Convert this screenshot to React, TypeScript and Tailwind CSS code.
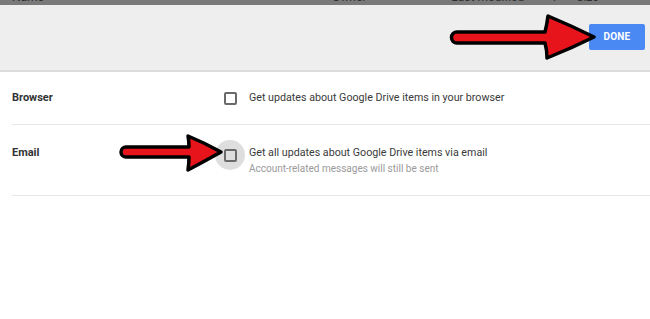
import React from "react";

export default function App() {
  return (
    <div
      className="relative w-[650px] h-[319px] overflow-hidden bg-white"
      style={{ fontFamily: "Roboto, 'Liberation Sans', sans-serif" }}
    >
      {/* cut-off table header */}
      <div className="relative h-[5px] overflow-hidden bg-[#797979] text-[12px] leading-[12px] text-[#2f2f2f]">
        <div className="-mt-[9px] flex">
          <span className="ml-[12px]">Name</span>
          <span className="ml-[288px]">Owner</span>
          <span className="ml-[85px]">Last modified</span>
          <span className="ml-[27px]">↓</span>
          <span className="ml-[19px]">Size</span>
        </div>
      </div>

      {/* action band */}
      <div className="flex h-[67px] items-center justify-end border-b-2 border-[#dcdcdc] bg-[#eeeeee] pr-[5px] pb-[2px]">
        <button className="flex h-[26px] w-[56px] items-center justify-center rounded-[2px] bg-[#4a89f3] text-[10px] font-bold tracking-[0.2px] text-white">
          DONE
        </button>
      </div>

      {/* settings rows */}
      <div className="pl-[12px]">
        <div className="flex h-[53px] items-center border-b border-[#e8e8e8]">
          <div className="w-[212px] text-[11px] font-bold text-[#333]">Browser</div>
          <div className="h-[13px] w-[13px] rounded-[2px] border-2 border-[#6a6a6a]" />
          <div className="ml-[12px] text-[10.7px] text-[#3a3a3a]">
            Get updates about Google Drive items in your browser
          </div>
        </div>
        <div className="flex h-[71px] items-start border-b border-[#e8e8e8] pt-[11px]">
          <div className="mt-[9px] w-[212px] text-[11px] font-bold text-[#333]">Email</div>
          <div className="relative mt-[4px] flex h-[30px] w-[30px] -ml-[9px] -mr-[8px] items-center justify-center rounded-full bg-[#dedede]">
            <div className="h-[13px] w-[13px] rounded-[2px] border-2 border-[#6a6a6a]" />
          </div>
          <div className="ml-[12px] flex flex-col pt-[9px]">
            <div className="text-[10.7px] leading-[16px] text-[#3a3a3a]">
              Get all updates about Google Drive items via email
            </div>
            <div className="text-[10px] leading-[15px] text-[#9a9a9a]">
              Account-related messages will still be sent
            </div>
          </div>
        </div>
      </div>

      {/* annotation arrows */}
      <svg
        className="pointer-events-none absolute left-0 top-0"
        width="650"
        height="319"
        viewBox="0 0 650 319"
      >
        <path
          d="M457,32 L545,32 Q547,24 548,16 Q572,26 594,37 Q572,48 547,58 Q547,50 545,43 L457,43 A5.5,5.5 0 0 1 457,32 Z"
          fill="#e8141b"
          stroke="#000"
          strokeWidth="3.5"
          strokeLinejoin="round"
        />
        <path
          d="M126,147 L189,147 Q189,141 188,136 Q205,143 221,152 Q205,161 188,170 Q189,163 189,157 L126,157 A5,5 0 0 1 126,147 Z"
          fill="#e8141b"
          stroke="#000"
          strokeWidth="3.5"
          strokeLinejoin="round"
        />
      </svg>
    </div>
  );
}
